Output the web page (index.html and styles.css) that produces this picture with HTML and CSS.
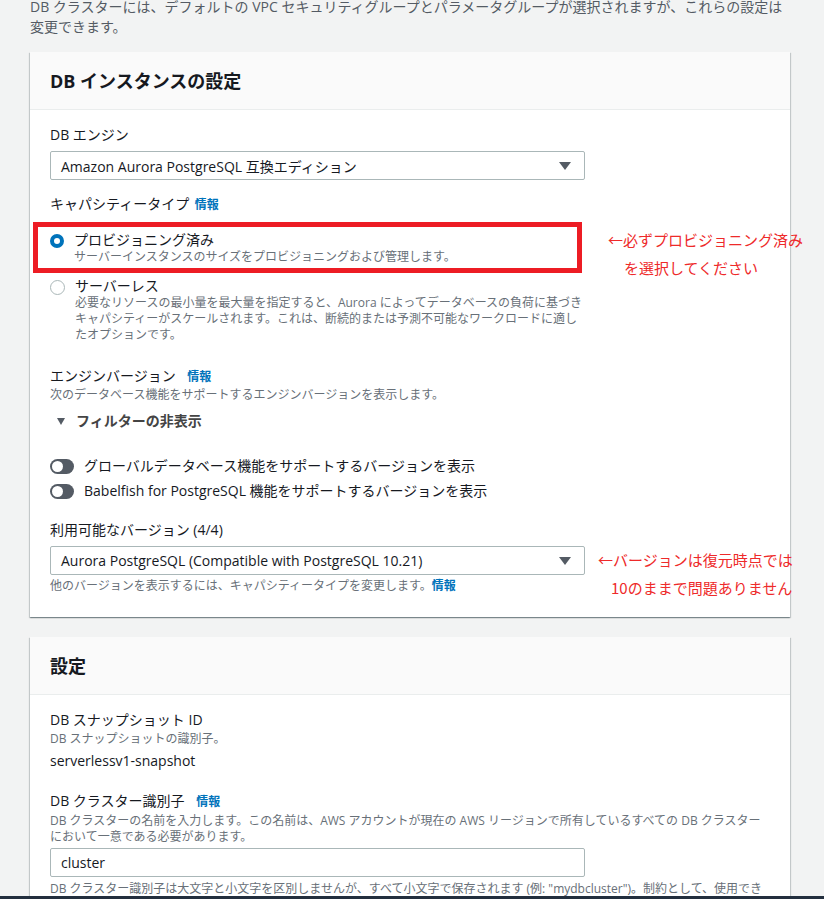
FILE: index.html
```html
<!DOCTYPE html>
<html lang="ja">
<head>
  <meta charset="UTF-8">
  <title>DB クラスターの復元</title>
  <link rel="stylesheet" href="styles.css">
</head>
<body>
  <div class="page">
    <p class="intro">DB クラスターには、デフォルトの VPC セキュリティグループとパラメータグループが選択されますが、これらの設定は変更できます。</p>

    <!-- DB instance settings -->
    <div class="card">
      <div class="card-header"><h2>DB インスタンスの設定</h2></div>
      <div class="card-body body-instance">
        <div class="label">DB エンジン</div>
        <div class="select">
          <span>Amazon Aurora PostgreSQL 互換エディション</span>
          <span class="caret"></span>
        </div>

        <div class="label label-cap">キャパシティータイプ <a class="info info-near">情報</a></div>
        <div class="radio-group">
          <div class="radio-item">
            <span class="radio checked"></span>
            <div class="radio-text">
              <div class="radio-title">プロビジョニング済み</div>
              <div class="desc">サーバーインスタンスのサイズをプロビジョニングおよび管理します。</div>
            </div>
          </div>
          <div class="radio-item">
            <span class="radio"></span>
            <div class="radio-text">
              <div class="radio-title">サーバーレス</div>
              <div class="desc">必要なリソースの最小量を最大量を指定すると、Aurora によってデータベースの負荷に基づきキャパシティーがスケールされます。これは、断続的または予測不可能なワークロードに適したオプションです。</div>
            </div>
          </div>
        </div>

        <div class="label label-ver">エンジンバージョン <a class="info">情報</a></div>
        <div class="desc">次のデータベース機能をサポートするエンジンバージョンを表示します。</div>
        <div class="expander"><span class="tri"></span>フィルターの非表示</div>
        <div class="toggles">
          <div class="toggle-row"><span class="toggle"></span>グローバルデータベース機能をサポートするバージョンを表示</div>
          <div class="toggle-row"><span class="toggle"></span>Babelfish for PostgreSQL 機能をサポートするバージョンを表示</div>
        </div>

        <div class="label label-avail">利用可能なバージョン (4/4)</div>
        <div class="select select-ver">
          <span>Aurora PostgreSQL (Compatible with PostgreSQL 10.21)</span>
          <span class="caret"></span>
        </div>
        <div class="desc hint">他のバージョンを表示するには、キャパシティータイプを変更します。<a class="info">情報</a></div>
      </div>

      <!-- annotations -->
      <div class="mark-box"></div>
      <div class="note note-1">←必ずプロビジョニング済み<br><span class="indent">を選択してください</span></div>
      <div class="note note-2">←バージョンは復元時点では<br><span class="indent">10のままで問題ありません</span></div>
    </div>

    <!-- Settings -->
    <div class="card">
      <div class="card-header"><h2>設定</h2></div>
      <div class="card-body body-settings">
        <div class="label">DB スナップショット ID</div>
        <div class="desc">DB スナップショットの識別子。</div>
        <div class="value">serverlessv1-snapshot</div>

        <div class="label label-cluster">DB クラスター識別子 <a class="info">情報</a></div>
        <div class="desc">DB クラスターの名前を入力します。この名前は、AWS アカウントが現在の AWS リージョンで所有しているすべての DB クラスターにおいて一意である必要があります。</div>
        <div class="input">cluster</div>
        <div class="desc hint">DB クラスター識別子は大文字と小文字を区別しませんが、すべて小文字で保存されます (例: "mydbcluster")。制約として、使用でき</div>
      </div>
    </div>
  </div>
  <div class="footer-bar"></div>
</body>
</html>
```

FILE: styles.css
```css
body {
  margin: 0;
  background-color: #f2f3f3;
  color: #16191f;
  font-family: "Open Sans", "Noto Sans CJK JP", sans-serif;
  font-size: 14px;
  overflow: hidden;
}

.page {
  width: 760px;
  padding-left: 30px;
}

.intro {
  margin: -3px 0 15px;
  line-height: 20px;
  color: #545b64;
  padding-right: 4px;
}

/* Cards */
.card {
  position: relative;
  background: #fff;
  box-shadow: 0 1px 1px 0 rgba(0, 28, 36, 0.3), 1px 1px 1px 0 rgba(0, 28, 36, 0.15), -1px 1px 1px 0 rgba(0, 28, 36, 0.15);
  margin-bottom: 20px;
}

.card-header {
  background: #fafafa;
  border-bottom: 1px solid #eaeded;
  padding: 18px 20px 17px;
}

.card-header h2 {
  margin: 0;
  font-size: 18px;
  line-height: 22px;
  font-weight: bold;
}

.card-body {
  padding: 14px 20px 23px;
}

.label {
  line-height: 22px;
}

.label-cap { margin-top: 13px; }
.label-ver { margin-top: 23px; line-height: 20px; }
.label-avail { margin-top: 17px; }

.info {
  color: #0073bb;
  font-size: 12px;
  font-weight: bold;
  margin-left: 8px;
}

.info-near { margin-left: 2px; }

.desc {
  font-size: 12px;
  line-height: 16px;
  color: #687078;
}

.hint .info { margin-left: 0; }

/* Select / input */
.select,
.input {
  box-sizing: border-box;
  width: 535px;
  height: 29px;
  margin-top: 5px;
  border: 1px solid #aab7b8;
  border-radius: 2px;
  padding: 0 13px 0 10px;
  display: flex;
  align-items: center;
  justify-content: space-between;
}

.select-ver { margin-top: 5px; }

.caret {
  width: 0;
  height: 0;
  border-left: 6px solid transparent;
  border-right: 6px solid transparent;
  border-top: 8px solid #545b64;
}

.hint { margin-top: 3px; }

/* Radios */
.radio-group {
  margin-top: 15px;
  display: flex;
  flex-direction: column;
  gap: 12px;
}

.radio-item {
  display: flex;
  gap: 10px;
}

.radio-text {
  width: 512px;
}

.radio {
  box-sizing: border-box;
  flex: none;
  width: 14px;
  height: 14px;
  margin-top: 3px;
  border-radius: 50%;
  border: 2px solid #aab7b8;
  background: #fff;
}

.radio.checked {
  border: 4px solid #0073bb;
}

.radio-item + .radio-item .radio {
  width: 15px;
  height: 15px;
  border-width: 1px;
}

.radio-title {
  line-height: 18px;
}

/* Filters */
.expander {
  margin-top: 7px;
  line-height: 22px;
  font-weight: bold;
  color: #444;
  display: flex;
  align-items: center;
  padding-left: 7px;
}

.tri {
  width: 0;
  height: 0;
  border-left: 4px solid transparent;
  border-right: 4px solid transparent;
  border-top: 7px solid #545b64;
  margin-right: 11px;
}

.toggles {
  margin-top: 23px;
  display: flex;
  flex-direction: column;
  gap: 3px;
}

.toggle-row {
  display: flex;
  align-items: center;
  gap: 10px;
  line-height: 22px;
}

.toggle {
  position: relative;
  width: 24px;
  height: 15px;
  border-radius: 8px;
  background: #545b64;
}

.toggle::after {
  content: "";
  position: absolute;
  left: 2px;
  top: 2px;
  width: 11px;
  height: 11px;
  border-radius: 50%;
  background: #fff;
}

/* Settings card */
.body-settings {
  padding-top: 15px;
  padding-bottom: 20px;
}

.body-settings .label { line-height: 20px; }

.body-settings .desc { margin-top: 1px; }

.value {
  margin-top: 4px;
  line-height: 20px;
}

.label-cluster { margin-top: 20px; }

.input {
  margin-top: 3px;
}

.body-settings .hint {
  margin-top: 4px;
  white-space: nowrap;
}

/* Annotations */
.mark-box {
  position: absolute;
  left: 3px;
  top: 170px;
  width: 549px;
  height: 51px;
  box-sizing: border-box;
  border: 5px solid #ed1c24;
}

.note {
  position: absolute;
  color: #ee2a2a;
  font-family: "Noto Sans CJK JP", sans-serif;
  font-size: 15px;
  line-height: 28px;
  white-space: nowrap;
}

.note .indent { padding-left: 16px; }

.note-1 { left: 578px; top: 174px; }
.note-2 { left: 568px; top: 494px; }

.note-2 .indent { padding-left: 13px; }

.footer-bar {
  position: fixed;
  left: 0;
  right: 0;
  bottom: 0;
  height: 3px;
  background: #232f3e;
}
```
